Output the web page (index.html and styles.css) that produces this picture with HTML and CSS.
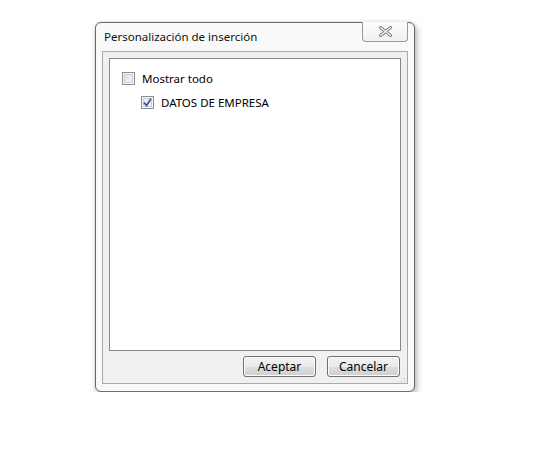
FILE: index.html
```html
<!DOCTYPE html>
<html lang="es">
<head>
<meta charset="utf-8">
<title>Personalización de inserción</title>
<link rel="stylesheet" href="styles.css">
</head>
<body>
<div class="window">
  <div class="titlebar">
    <span class="title">Personalización de inserción</span>
    <button class="close" aria-label="Cerrar">
      <svg width="13" height="11" viewBox="0 0 13 11">
        <path d="M1.5 1.5 L11.5 9.5 M11.5 1.5 L1.5 9.5" stroke="#7d7d7d" stroke-width="3" stroke-linecap="round"/>
        <path d="M1.5 1.5 L11.5 9.5 M11.5 1.5 L1.5 9.5" stroke="#fafafa" stroke-width="1.1" stroke-linecap="round"/>
      </svg>
    </button>
  </div>
  <div class="client">
    <div class="list">
      <label class="item">
        <span class="cb"></span>
        <span>Mostrar todo</span>
      </label>
      <label class="item sub">
        <span class="cb checked">
          <svg width="9" height="9" viewBox="0 0 9 9"><path d="M1 4.5 L3.5 7.5 L8 0.8" fill="none" stroke="#3c4fa0" stroke-width="1.7"/></svg>
        </span>
        <span>DATOS DE EMPRESA</span>
      </label>
    </div>
    <div class="buttons">
      <button class="btn">Aceptar</button>
      <button class="btn">Cancelar</button>
    </div>
    <div class="grip"></div>
  </div>
</div>
</body>
</html>
```

FILE: styles.css
```css
* { box-sizing: border-box; }
html, body { margin: 0; background: #fff; }
body {
  padding: 22px 0 0 95px;
  font-family: "Noto Sans", "Open Sans", sans-serif;
  font-size: 11.5px;
  color: #000;
}
.window {
  position: relative;
  width: 320px;
  height: 370px;
  border: 1px solid #6b6b6b;
  border-radius: 6px;
  background: #f9f9f9;
  box-shadow: 2px 3px 6px rgba(0,0,0,0.28), 0 0 3px rgba(0,0,0,0.15);
  display: flex;
  flex-direction: column;
}
.titlebar {
  height: 28px;
  padding: 6px 0 0 8px;
  flex: none;
}
.title {
  font-size: 11.5px;
  color: #111;
}
.close {
  position: absolute;
  top: -1px;
  right: 6px;
  width: 46px;
  height: 20px;
  border: 1px solid #9a9a9a;
  border-top: none;
  border-radius: 0 0 4px 4px;
  background: linear-gradient(#fdfdfd, #f0f0f0);
  padding: 0;
  display: flex;
  align-items: center;
  justify-content: center;
}
.client {
  position: relative;
  flex: 1;
  margin: 0 6px 7px 6px;
  border: 1px solid #a9a9a9;
  background: #f0f0f0;
  padding: 6px 6px 0 6px;
  display: flex;
  flex-direction: column;
}
.list {
  height: 293px;
  border: 1px solid #828790;
  background: #fff;
  padding: 13px 0 0 12px;
  display: flex;
  flex-direction: column;
  gap: 11px;
}
.item {
  display: flex;
  align-items: center;
  gap: 7px;
  height: 13px;
  font-size: 11.5px;
}
.item.sub { padding-left: 19px; }
.cb {
  width: 13px;
  height: 13px;
  border: 1px solid #8e8f8f;
  background: linear-gradient(135deg, #dcdcdc, #f8f8f8);
  box-shadow: inset 0 0 0 1px #f4f4f4, inset 0 0 0 2px #d0d0d0;
  display: flex;
  align-items: center;
  justify-content: center;
  flex: none;
}
.cb.checked {
  background: linear-gradient(135deg, #e4e4e4, #fbfbfb);
}
.buttons {
  display: flex;
  justify-content: flex-end;
  gap: 11px;
  margin-top: 5px;
  padding-right: 1px;
}
.btn {
  width: 73px;
  height: 21px;
  border: 1px solid #707070;
  border-radius: 3px;
  background: linear-gradient(#f2f2f2 0%, #ebebeb 50%, #dddddd 51%, #cfcfcf 100%);
  box-shadow: inset 0 0 0 1px #fcfcfc;
  font-family: "Noto Sans", "Open Sans", sans-serif;
  font-size: 12px;
  color: #000;
  padding: 0;
}
.grip {
  position: absolute;
  right: 1px;
  bottom: 0px;
  width: 9px;
  height: 9px;
  background:
    radial-gradient(circle, #b5b5b5 0.8px, transparent 1px) 0 0 / 3px 3px;
  clip-path: polygon(100% 0, 100% 100%, 0 100%);
}
```
